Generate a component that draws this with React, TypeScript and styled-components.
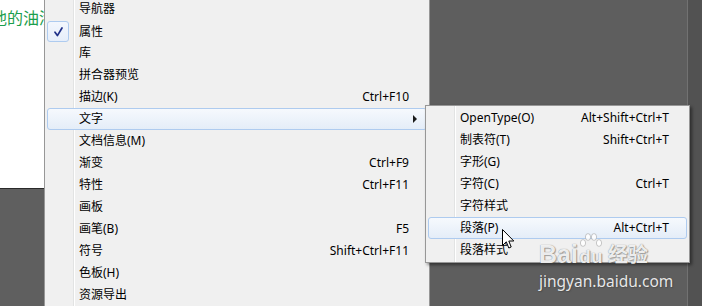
import React from "react";
import styled, {createGlobalStyle} from "styled-components";

const GlobalStyle = createGlobalStyle`
  html, body {
    margin: 0;
    padding: 0;
    background: #5f5f5f;
  }
`;

const Screen = styled.div`
  position: relative;
  display: flex;
  width: 702px;
  height: 306px;
  overflow: hidden;
  font-family: "Noto Sans", "Noto Sans CJK SC", sans-serif;
  font-size: 12px;
  color: #000;
`;

const LeftPane = styled.div`
  width: 44px;
  display: flex;
  flex-direction: column;
  background: #5f5f5f;
`;

const Document = styled.div`
  height: 188px;
  background: #fff;
  border-bottom: 1px solid #2a2a2a;
  overflow: hidden;
  white-space: nowrap;
`;

const DocText = styled.div`
  margin: 7px 0 0 -9px;
  font-family: "Noto Sans CJK SC", sans-serif;
  font-size: 16px;
  line-height: 20px;
  color: #1b9e4d;
`;

const Menu = styled.div<{$gutter: number}>`
  box-sizing: border-box;
  border: 1px solid #979797;
  background: linear-gradient(
    to right,
    #f0f0f0 ${(p) => p.$gutter}px,
    #e2e3e3 ${(p) => p.$gutter}px,
    #e2e3e3 ${(p) => p.$gutter + 1}px,
    #ffffff ${(p) => p.$gutter + 1}px,
    #ffffff ${(p) => p.$gutter + 2}px,
    #f0f0f0 ${(p) => p.$gutter + 2}px
  );
`;

const MainMenu = styled(Menu)`
  width: 386px;
  border-top: none;
  border-bottom: none;
`;

const MainList = styled.div`
  margin-top: -2px;
`;

const SubMenu = styled(Menu)`
  position: absolute;
  left: 425px;
  top: 105px;
  width: 265px;
  padding: 1px 0;
  box-shadow: 2px 2px 3px rgba(0, 0, 0, 0.45);
`;

const RightPane = styled.div`
  flex: 1;
  display: flex;
  background: #5e5e5e;
`;

const Workspace = styled.div`
  flex: 1;
`;

const Dock = styled.div`
  width: 14px;
  border-left: 1px solid #727272;
  background: #525252;
`;

const Row = styled.div<{$active?: boolean}>`
  box-sizing: border-box;
  display: grid;
  grid-template-columns: 22px 1fr auto 17px;
  align-items: center;
  height: 22px;
  margin: 0 2px;
  border: 1px solid ${(p) => (p.$active ? "#aecbef" : "transparent")};
  border-radius: 3px;
  background: ${(p) =>
    p.$active ? "linear-gradient(#f6f9fd, #e4edf8)" : "transparent"};
  white-space: nowrap;
`;

const CheckBox = styled.div`
  box-sizing: border-box;
  width: 22px;
  height: 21px;
  margin-left: -1px;
  border: 1px solid #aecbef;
  border-radius: 3px;
  background: linear-gradient(#f3f7fd, #e6eefa);
  display: flex;
  align-items: center;
  justify-content: center;
`;

const Label = styled.span`
  padding-left: 9px;
  line-height: 1;
`;

const Shortcut = styled.span`
  text-align: right;
  line-height: 1;
`;

const Arrow = styled.span`
  justify-self: start;
  margin-left: 4px;
  width: 0;
  height: 0;
  border-top: 4px solid transparent;
  border-bottom: 4px solid transparent;
  border-left: 4px solid #1a1a1a;
`;

const Cursor = styled.svg`
  position: absolute;
  left: 502px;
  top: 229px;
`;

const Watermark = styled.div`
  position: absolute;
  left: 539px;
  top: 228px;
  display: flex;
  flex-direction: column;
  align-items: flex-start;
  color: rgba(255, 255, 255, 0.88);
  text-shadow: 0 0 1px rgba(70, 70, 70, 0.7), 1px 1px 1px rgba(60, 60, 60, 0.4);
  pointer-events: none;
`;

const Logo = styled.div`
  display: flex;
  align-items: flex-end;
  font-family: "Liberation Sans", sans-serif;
  font-weight: bold;
  font-size: 25px;
  line-height: 24px;
  height: 38px;
`;

const PawDu = styled.span`
  display: inline-flex;
  flex-direction: column;
  align-items: center;
  margin-left: 1px;
`;

const Du = styled.span`
  font-size: 19px;
  line-height: 18px;
  margin-top: -3px;
`;

const Jingyan = styled.span`
  margin-left: 5px;
  font-family: "Noto Sans CJK SC", sans-serif;
  font-weight: bold;
  font-size: 20px;
  line-height: 24px;
`;

const Domain = styled.div`
  margin-top: 5px;
  font-family: "Noto Sans", sans-serif;
  font-size: 15.5px;
  line-height: 20px;
`;

type Item = {
  label: string;
  shortcut?: string;
  checked?: boolean;
  active?: boolean;
  submenu?: boolean;
};

const mainItems: Item[] = [
  {label: "导航器"},
  {label: "属性", checked: true},
  {label: "库"},
  {label: "拼合器预览"},
  {label: "描边(K)", shortcut: "Ctrl+F10"},
  {label: "文字", active: true, submenu: true},
  {label: "文档信息(M)"},
  {label: "渐变", shortcut: "Ctrl+F9"},
  {label: "特性", shortcut: "Ctrl+F11"},
  {label: "画板"},
  {label: "画笔(B)", shortcut: "F5"},
  {label: "符号", shortcut: "Shift+Ctrl+F11"},
  {label: "色板(H)"},
  {label: "资源导出"},
];

const subItems: Item[] = [
  {label: "OpenType(O)", shortcut: "Alt+Shift+Ctrl+T"},
  {label: "制表符(T)", shortcut: "Shift+Ctrl+T"},
  {label: "字形(G)"},
  {label: "字符(C)", shortcut: "Ctrl+T"},
  {label: "字符样式"},
  {label: "段落(P)", shortcut: "Alt+Ctrl+T", active: true},
  {label: "段落样式"},
];

const Check = () => (
  <svg width="9" height="10" viewBox="0 0 9 10">
    <path
      d="M1 5.2 L3.4 8.6 L8 1"
      fill="none"
      stroke="#1f3088"
      strokeWidth="1.7"
      strokeLinecap="round"
      strokeLinejoin="round"
    />
  </svg>
);

const MenuRow: React.FC<{item: Item}> = ({item}) => (
  <Row $active={item.active}>
    {item.checked ? (
      <CheckBox>
        <Check />
      </CheckBox>
    ) : (
      <span />
    )}
    <Label>{item.label}</Label>
    <Shortcut>{item.shortcut}</Shortcut>
    {item.submenu ? <Arrow /> : <span />}
  </Row>
);

export default function App() {
  return (
    <>
      <GlobalStyle />
      <Screen>
        <LeftPane>
          <Document>
            <DocText>他的油漆</DocText>
          </Document>
        </LeftPane>

        <MainMenu $gutter={28}>
          <MainList>
            {mainItems.map((item) => (
              <MenuRow key={item.label} item={item} />
            ))}
          </MainList>
        </MainMenu>

        <RightPane>
          <Workspace />
          <Dock />
        </RightPane>

        <SubMenu $gutter={28}>
          {subItems.map((item) => (
            <MenuRow key={item.label} item={item} />
          ))}
        </SubMenu>

        <Watermark>
          <Logo>
            <span>Bai</span>
            <PawDu>
              <svg width="24" height="18" viewBox="0 0 24 18">
                <g fill="rgba(255,255,255,0.88)" stroke="rgba(80,80,80,0.5)" strokeWidth="0.6">
                  <ellipse cx="4" cy="10" rx="2.6" ry="3.4" />
                  <ellipse cx="9" cy="4" rx="2.6" ry="3.4" />
                  <ellipse cx="15" cy="4" rx="2.6" ry="3.4" />
                  <ellipse cx="20" cy="10" rx="2.6" ry="3.4" />
                </g>
              </svg>
              <Du>du</Du>
            </PawDu>
            <Jingyan>经验</Jingyan>
          </Logo>
          <Domain>jingyan.baidu.com</Domain>
        </Watermark>

        <Cursor width="13" height="21" viewBox="0 0 13 21">
          <path
            d="M0.5 0.5 L0.5 16.5 L4.3 12.8 L6.8 19 L9.2 18 L6.8 12 L11.8 12 Z"
            fill="#fff"
            stroke="#000"
            strokeWidth="1"
            strokeLinejoin="round"
          />
        </Cursor>
      </Screen>
    </>
  );
}
